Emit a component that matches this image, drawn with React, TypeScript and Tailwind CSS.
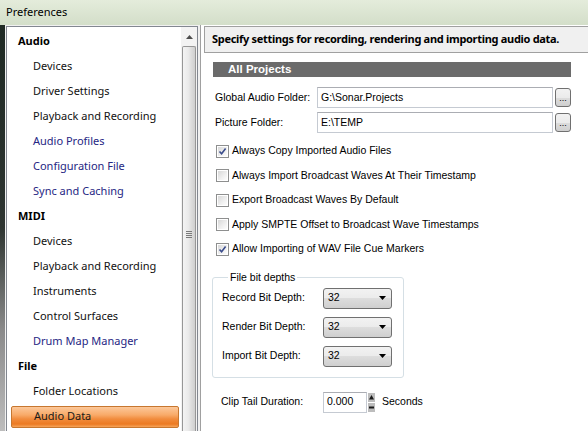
import React from "react";

interface TreeItem {
  label: string;
  group?: boolean;
  link?: boolean;
  selected?: boolean;
}

const treeItems: TreeItem[] = [
  { label: "Audio", group: true },
  { label: "Devices" },
  { label: "Driver Settings" },
  { label: "Playback and Recording" },
  { label: "Audio Profiles", link: true },
  { label: "Configuration File", link: true },
  { label: "Sync and Caching", link: true },
  { label: "MIDI", group: true },
  { label: "Devices" },
  { label: "Playback and Recording" },
  { label: "Instruments" },
  { label: "Control Surfaces" },
  { label: "Drum Map Manager", link: true },
  { label: "File", group: true },
  { label: "Folder Locations" },
  { label: "Audio Data", selected: true },
];

const checkboxes = [
  { label: "Always Copy Imported Audio Files", checked: true },
  { label: "Always Import Broadcast Waves At Their Timestamp", checked: false },
  { label: "Export Broadcast Waves By Default", checked: false },
  { label: "Apply SMPTE Offset to Broadcast Wave Timestamps", checked: false },
  { label: "Allow Importing of WAV File Cue Markers", checked: true },
];

const bitDepths = ["Record Bit Depth:", "Render Bit Depth:", "Import Bit Depth:"];

function TreeRow({ item }: { item: TreeItem }) {
  if (item.selected) {
    return (
      <div className="h-[25px] flex items-center pl-[4px] pr-[2px]">
        <div className="h-[22px] w-full flex items-center pl-[22px] rounded-[2px] border border-[#c7772f] bg-[linear-gradient(to_bottom,#fcc89a_0%,#f8aa68_40%,#f18c3d_60%,#ec7a22_85%,#f6a45a_100%)] text-[#1a1a1a]">
          {item.label}
        </div>
      </div>
    );
  }
  return (
    <div
      className={
        "h-[25px] flex items-center " +
        (item.group ? "pl-[11px] font-bold text-black" : "pl-[26px] ") +
        (item.link ? "text-[#262683]" : item.group ? "" : "text-[#111]")
      }
    >
      {item.label}
    </div>
  );
}

function Checkbox({ checked }: { checked: boolean }) {
  return (
    <div className="w-[13px] h-[13px] border border-[#8e8f8f] bg-white p-[1px] shrink-0">
      <div className="w-full h-full bg-[linear-gradient(135deg,#d8d8d8_0%,#f0f0f0_60%,#fdfdfd_100%)]">
        {checked && (
          <svg width="9" height="9" viewBox="0 0 9 9">
            <path d="M1.5 4.5 L3.6 6.8 L7.6 1.6" fill="none" stroke="#3a4c8c" strokeWidth="1.6" />
          </svg>
        )}
      </div>
    </div>
  );
}

function Dropdown() {
  return (
    <div className="w-[69px] h-[21px] rounded-[3px] border border-[#707070] bg-[linear-gradient(to_bottom,#f2f2f2_0%,#ebebeb_50%,#dddddd_50%,#cfcfcf_100%)] flex items-center justify-between pl-[4px] pr-[5px]">
      <span>32</span>
      <svg width="7" height="4" viewBox="0 0 7 4">
        <path d="M0 0 H7 L3.5 4 Z" fill="#000" />
      </svg>
    </div>
  );
}

function BrowseButton() {
  return (
    <div className="ml-[2px] w-[16px] h-[19px] rounded-[3px] border border-[#707070] bg-[linear-gradient(to_bottom,#f2f2f2_0%,#ebebeb_50%,#dddddd_50%,#cfcfcf_100%)] flex items-end justify-center pb-[3px] text-[9px] leading-none">
      ...
    </div>
  );
}

export default function App() {
  return (
    <div className="w-[588px] h-[431px] overflow-hidden flex flex-col bg-[#f0f0f0] font-['Noto_Sans',sans-serif] text-[11px] text-black">
      {/* title bar */}
      <div className="h-[25px] shrink-0 flex items-center pl-[6px] bg-[linear-gradient(to_bottom,#e4ecdb,#d3dec9)] text-[11px]">
        Preferences
      </div>

      <div className="flex-1 flex min-h-0">
        <div className="w-[5px] shrink-0 bg-[linear-gradient(to_bottom,#1f2a24,#2e3531_50%,#8a8a8a_75%,#bdbdbd)]" />

        {/* navigation tree */}
        <div className="ml-[1px] mt-[1px] w-[192px] shrink-0 flex border-l border-t border-r border-[#828790] bg-white">
          <div className="flex-1 pt-[2px]">
            {treeItems.map((item, i) => (
              <TreeRow key={i} item={item} />
            ))}
          </div>
          <div className="w-[16px] shrink-0 flex flex-col bg-[#f3f3f3]">
            <div className="h-[19px] flex items-center justify-center">
              <svg width="7" height="4" viewBox="0 0 7 4">
                <path d="M0 4 H7 L3.5 0 Z" fill="#4d4d4d" />
              </svg>
            </div>
            <div className="flex-1 mx-[1px] rounded-t-[2px] border border-b-0 border-[#979797] bg-[linear-gradient(to_right,#f4f4f4_0%,#eaeaea_45%,#dcdcdc_70%,#cfcfcf_100%)] flex flex-col items-center pt-[184px]">
              <div className="flex flex-col gap-[1px]">
                <div className="w-[6px] h-[1px] bg-[#7a7a7a]" />
                <div className="w-[6px] h-[1px] bg-[#7a7a7a]" />
                <div className="w-[6px] h-[1px] bg-[#7a7a7a]" />
                <div className="w-[6px] h-[1px] bg-[#7a7a7a]" />
              </div>
            </div>
          </div>
        </div>

        <div className="w-[2px] shrink-0" />

        {/* settings page */}
        <div className="flex-1 min-w-0 flex flex-col border-l border-[#a0a0a0] bg-white pl-[3px] pt-[1px] font-['Liberation_Sans',Arial,sans-serif] text-[10.5px]">
          <div className="h-[27px] shrink-0 flex items-center pl-[7px] border-l border-t border-b border-[#a0a0a0] bg-[#f0f0f0] font-['Noto_Sans',sans-serif] font-bold text-[11px] tracking-[-0.3px] whitespace-nowrap overflow-hidden">
            Specify settings for recording, rendering and importing audio data.
          </div>

          <div className="flex flex-col">
            <div className="mt-[9px] ml-[9px] w-[358px] h-[15px] bg-[#6b6b6b] text-white font-bold text-[11.5px] flex items-center pl-[15px]">
              All Projects
            </div>

            <div className="mt-[10px] ml-[11px] flex items-center">
              <div className="w-[102px]">Global Audio Folder:</div>
              <div className="w-[236px] h-[21px] border border-[#c5cad2] border-t-[#abadb3] flex items-center pl-[3px]">
                G:\Sonar.Projects
              </div>
              <BrowseButton />
            </div>
            <div className="mt-[4px] ml-[11px] flex items-center">
              <div className="w-[102px]">Picture Folder:</div>
              <div className="w-[236px] h-[21px] border border-[#c5cad2] border-t-[#abadb3] flex items-center pl-[3px]">
                E:\TEMP
              </div>
              <BrowseButton />
            </div>

            <div className="mt-[6px] flex flex-col">
              {checkboxes.map((c) => (
                <div key={c.label} className="h-[24.5px] ml-[12px] flex items-center gap-[3px]">
                  <Checkbox checked={c.checked} />
                  <span>{c.label}</span>
                </div>
              ))}
            </div>

            <fieldset className="mt-[9px] ml-[8px] w-[192px] rounded-[3px] border border-[#d5dfe5] pl-[9px] pt-[4px] pb-[10px]">
              <legend className="ml-[6px] px-[2px] leading-[13px]">File bit depths</legend>
              <div className="flex flex-col gap-[8px]">
                {bitDepths.map((label) => (
                  <div key={label} className="flex items-center">
                    <div className="w-[101px]">{label}</div>
                    <Dropdown />
                  </div>
                ))}
              </div>
            </fieldset>

            <div className="mt-[14px] ml-[17px] flex items-center">
              <div className="w-[102px]">Clip Tail Duration:</div>
              <div className="w-[44px] h-[21px] border border-[#c5cad2] border-t-[#abadb3] flex items-center pl-[3px]">
                0.000
              </div>
              <svg className="ml-[1px]" width="7" height="21" viewBox="0 0 7 21">
                <rect x="0" y="1" width="7" height="9" fill="#bdbdbd" />
                <rect x="0" y="11" width="7" height="9" fill="#bdbdbd" />
                <path d="M1 7.5 H6 L3.5 3 Z" fill="#1a1a1a" />
                <rect x="1" y="14.5" width="5" height="2" fill="#1a1a1a" />
              </svg>
              <span className="ml-[7px]">Seconds</span>
            </div>
          </div>
        </div>
      </div>
    </div>
  );
}
